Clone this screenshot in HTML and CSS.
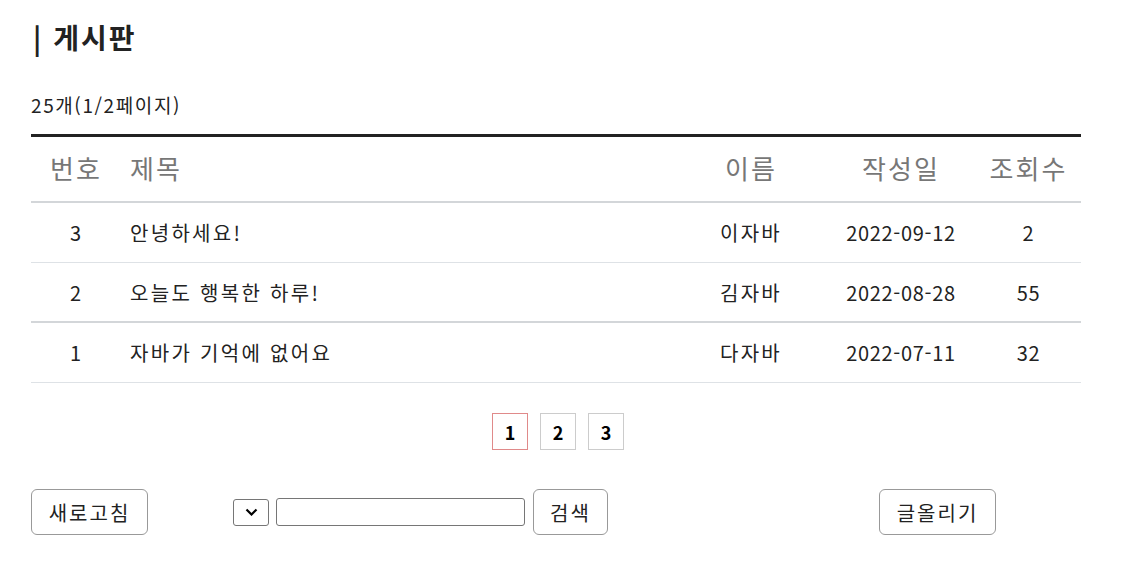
FILE: index.html
```html
<!DOCTYPE html>
<html lang="ko">
<head>
    <meta charset="UTF-8">
    <meta name="viewport" content="width=device-width, initial-scale=1.0">
    <title>게시판</title>
    <link rel="stylesheet" href="styles.css">
</head>
<body>
    <div class="board">
        <h1 class="board-title">| 게시판</h1>
        <p class="board-count">25개(1/2페이지)</p>

        <div class="board-table">
            <div class="row head">
                <div class="cell num">번호</div>
                <div class="cell subject">제목</div>
                <div class="cell">이름</div>
                <div class="cell">작성일</div>
                <div class="cell">조회수</div>
            </div>
            <div class="row">
                <div class="cell num">3</div>
                <div class="cell subject txt">안녕하세요!</div>
                <div class="cell txt">이자바</div>
                <div class="cell">2022-09-12</div>
                <div class="cell">2</div>
            </div>
            <div class="row thick">
                <div class="cell num">2</div>
                <div class="cell subject txt">오늘도 행복한 하루!</div>
                <div class="cell txt">김자바</div>
                <div class="cell">2022-08-28</div>
                <div class="cell">55</div>
            </div>
            <div class="row">
                <div class="cell num">1</div>
                <div class="cell subject txt">자바가 기억에 없어요</div>
                <div class="cell txt">다자바</div>
                <div class="cell">2022-07-11</div>
                <div class="cell">32</div>
            </div>
        </div>

        <div class="pager">
            <a class="page current">1</a>
            <a class="page">2</a>
            <a class="page">3</a>
        </div>

        <div class="toolbar">
            <button class="btn refresh">새로고침</button>
            <div class="search">
                <select class="search-type"><option></option></select>
                <input class="search-text" type="text">
                <button class="btn">검색</button>
            </div>
            <button class="btn write">글올리기</button>
        </div>
    </div>
</body>
</html>
```

FILE: styles.css
```css
body {
    margin: 0;
    font-family: "Noto Sans CJK KR", "Noto Sans", sans-serif;
    color: #222;
    background: #fff;
}

.board {
    width: 1050px;
    padding: 17px 0 0 31px;
}

.board-title {
    margin: 0 0 0 2px;
    font-size: 28px;
    line-height: 40px;
    font-weight: bold;
    letter-spacing: 2px;
    color: #222;
}

.board-count {
    margin: 30px 0 0;
    font-size: 19px;
    line-height: 36px;
    letter-spacing: 1.6px;
}

.board-table {
    margin-top: 11px;
    border-top: 3px solid #222;
}

.row {
    display: grid;
    grid-template-columns: 90px 1fr 150px 150px 105px;
    height: 59px;
    align-items: center;
    border-bottom: 1px solid #dee2e6;
    font-size: 20px;
    letter-spacing: 0.7px;
}

.row.head {
    height: 61px;
    padding-bottom: 3px;
    border-bottom: 2px solid #d3d6d9;
    font-size: 26px;
    letter-spacing: 2px;
    color: #777;
}

.row.thick {
    height: 58px;
    border-bottom: 2px solid #d3d6d9;
}

.cell {
    text-align: center;
}

.cell.txt {
    letter-spacing: 2.3px;
}

.cell.subject {
    text-align: left;
    padding-left: 9px;
}

.pager {
    display: flex;
    justify-content: center;
    gap: 12px;
    margin-top: 30px;
    padding-left: 4px;
}

.page {
    width: 34px;
    height: 35px;
    border: 1px solid #ccc;
    display: flex;
    align-items: center;
    justify-content: center;
    font-size: 18px;
    font-weight: bold;
    color: #000;
}

.page.current {
    border-color: #e08a8a;
}

.toolbar {
    display: flex;
    align-items: center;
    margin-top: 39px;
}

.btn {
    height: 46px;
    padding: 0;
    border: 1px solid #999;
    border-radius: 6px;
    background: #fff;
    font-family: inherit;
    font-size: 20px;
    letter-spacing: 2px;
    color: #222;
}

.refresh {
    width: 117px;
}

.search {
    display: flex;
    align-items: center;
    margin-left: 85px;
}

.search-type {
    width: 36px;
    height: 27px;
    border: 1px solid #767676;
    border-radius: 3px;
    appearance: none;
    background: #fff url("data:image/svg+xml,%3Csvg xmlns='http://www.w3.org/2000/svg' width='13' height='8' viewBox='0 0 13 8'%3E%3Cpath d='M1.5 1.5 6.5 6.5l5-5' fill='none' stroke='%23000' stroke-width='2.2'/%3E%3C/svg%3E") no-repeat center;
}

.search-text {
    width: 249px;
    height: 28px;
    box-sizing: border-box;
    margin-left: 7px;
    border: 1px solid #767676;
    border-radius: 3px;
}

.search .btn {
    width: 75px;
    margin-left: 8px;
}

.write {
    width: 117px;
    margin-left: 271px;
}
```
